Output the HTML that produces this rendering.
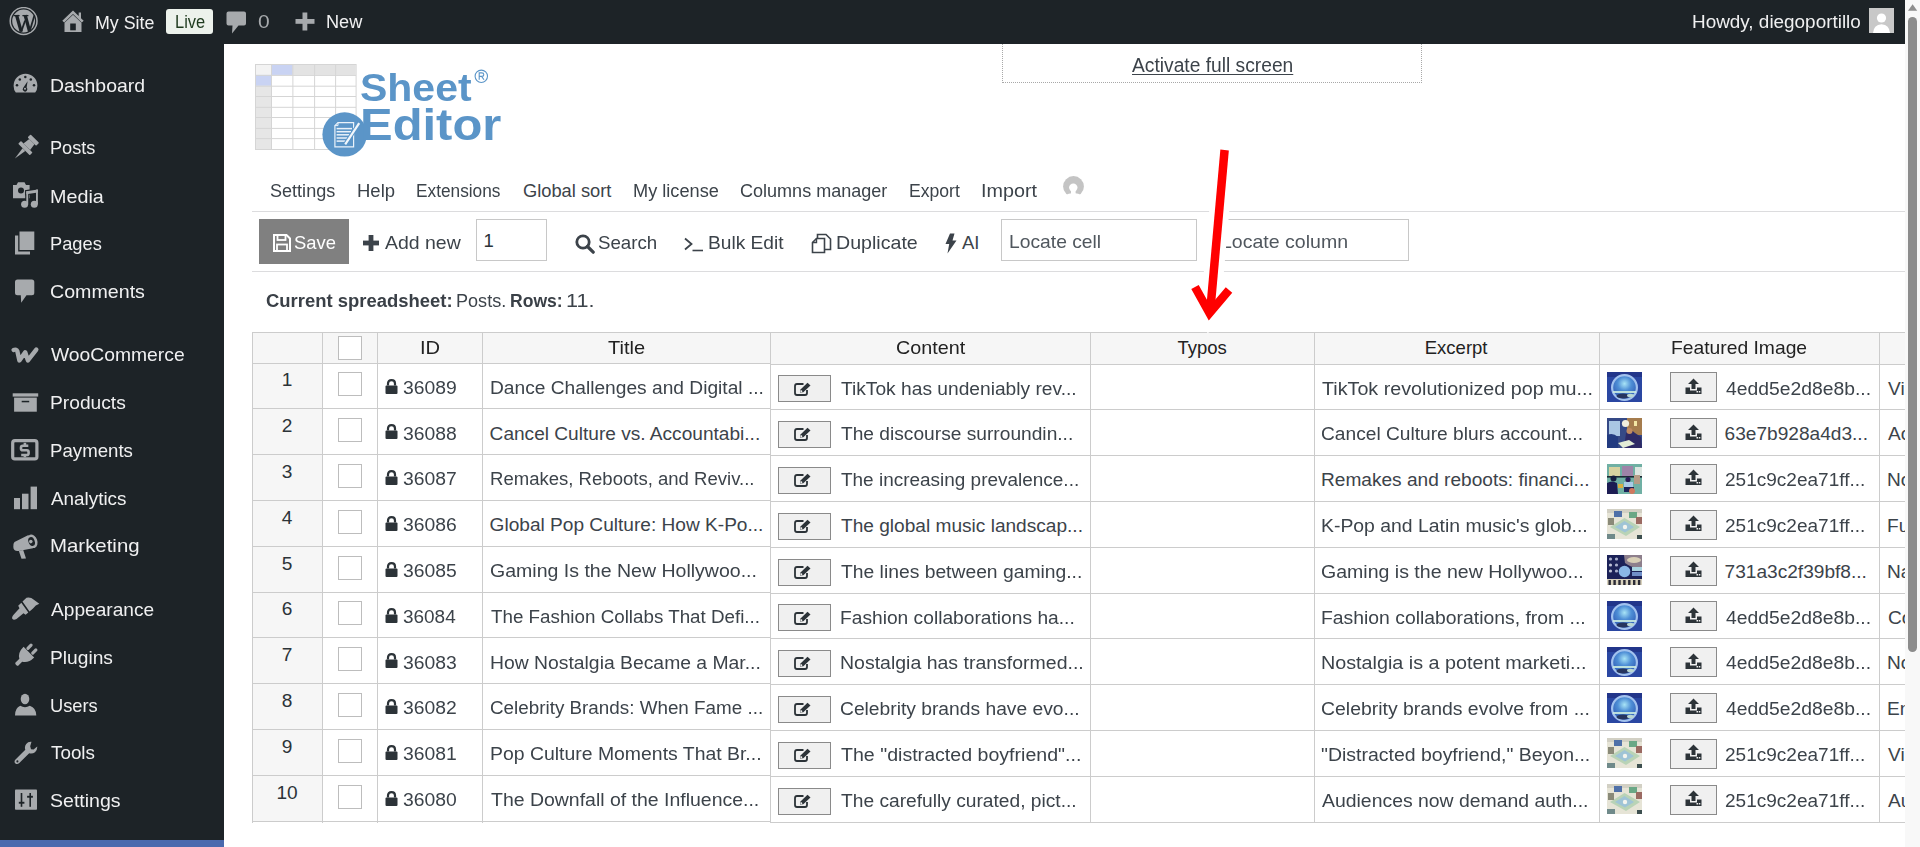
<!DOCTYPE html>
<html><head><meta charset="utf-8">
<style>
html,body{margin:0;padding:0}
body{width:1920px;height:847px;overflow:hidden;position:relative;background:#fff;font-family:"Liberation Sans",sans-serif}
.a{position:absolute}
.t{position:absolute;white-space:nowrap;line-height:1;transform-origin:0 0}
#ab{left:0;top:0;width:1905px;height:44px;background:#1d2327}
#sb{left:0;top:44px;width:224px;height:803px;background:#1d2327}
#sbact{left:0;top:840px;width:224px;height:7px;background:#4a6aae}
#track{left:1905px;top:0;width:15px;height:847px;background:#f8f8f8}
#thumb{left:1908px;top:17px;width:9px;height:635px;background:#8c8c8c;border-radius:5px}
.hl{position:absolute;height:1px;background:#ccc}
.vl{position:absolute;width:1px;background:#ccc}
.cb{position:absolute;width:22px;height:22px;border:1px solid #bdbdbd;background:#fff;box-sizing:content-box}
.eb{position:absolute;width:51px;height:25px;border:1px solid #8a8a8a;background:#f0f0f0}
.ub{position:absolute;width:45px;height:28px;border:1px solid #8a8a8a;background:#f0f0f0}
#clip{left:224px;top:44px;width:1681px;height:803px;overflow:hidden}
</style></head><body>
<div class="a" id="ab"></div>
<div class="a" id="sb"></div>
<div class="a" id="sbact"></div>

<!-- admin bar icons -->
<svg class="a" style="left:9px;top:7px" width="29" height="29" viewBox="0 0 29 29">
 <circle cx="14.6" cy="14" r="13.4" fill="none" stroke="#a7aaad" stroke-width="1.5"/>
 <circle cx="14.6" cy="14" r="11.4" fill="#a7aaad"/>
 <g stroke="#1d2327" fill="none" stroke-linecap="butt">
  <line x1="7.6" y1="8.2" x2="12.2" y2="24.6" stroke-width="3.3"/>
  <line x1="12.2" y1="24.6" x2="16.1" y2="13.6" stroke-width="1.7"/>
  <line x1="16.2" y1="8.2" x2="20.6" y2="24.6" stroke-width="3.3"/>
  <line x1="20.6" y1="24.6" x2="25.4" y2="8.6" stroke-width="1.8"/>
  <line x1="4.6" y1="8.6" x2="10.6" y2="8.6" stroke-width="1.3"/>
  <line x1="13.4" y1="8.6" x2="19.4" y2="8.6" stroke-width="1.3"/>
 </g>
</svg>
<svg class="a" style="left:62px;top:10px" width="22" height="23" viewBox="0 0 22 23">
 <path d="M11 0.5 L0.3 10.8 L2.2 12.4 L11 4 L19.8 12.4 L21.7 10.8 L19 8.2 L19 2.5 L16.7 2.5 L16.7 6 Z" fill="#a7aaad"/>
 <path d="M2.5 12.8 L11 4.8 L19.5 12.8 L19.5 22 L2.5 22 Z" fill="#a7aaad"/>
 <rect x="8.2" y="13.5" width="5.6" height="6.8" fill="#1d2327"/>
</svg>
<div class="a" style="left:166px;top:9px;width:47px;height:25px;background:#edf2ec;border-radius:3px"></div>
<svg class="a" style="left:226px;top:11px" width="21" height="23" viewBox="0 0 21 23">
 <path d="M2.5 0.5 H18 Q20 0.5 20 2.5 V12.5 Q20 14.5 18 14.5 H12.5 L6 22.5 L6.5 14.5 H2.5 Q0.5 14.5 0.5 12.5 V2.5 Q0.5 0.5 2.5 0.5 Z" fill="#a7aaad"/>
</svg>
<svg class="a" style="left:295px;top:12px" width="20" height="19" viewBox="0 0 20 19">
 <rect x="7.5" y="0.5" width="4.8" height="18" fill="#a7aaad"/><rect x="0.5" y="7" width="19" height="4.8" fill="#a7aaad"/>
</svg>
<svg class="a" style="left:1869px;top:8px" width="25" height="25" viewBox="0 0 25 25">
 <rect width="25" height="25" fill="#c8c8c8"/>
 <circle cx="12.5" cy="10" r="4.6" fill="#fff"/>
 <path d="M4 25 Q4.5 16.8 12.5 16.2 Q20.5 16.8 21 25 Z" fill="#fff"/>
</svg>

<!-- sidebar icons -->
<div id="sbicons"></div>
<svg class="a" style="left:0;top:44px" width="60" height="800" viewBox="0 44 60 800">
<path d="M25.5 73.8 A12 12 0 0 1 37.4 85.8 Q37.4 90 35.2 92.6 L15.8 92.6 Q13.6 90 13.6 85.8 A12 12 0 0 1 25.5 73.8 Z" fill="#a7aaad"/>
<circle cx="25.3" cy="77" r="1.25" fill="#1d2327"/>
<circle cx="19.8" cy="79.5" r="1.25" fill="#1d2327"/>
<circle cx="30.8" cy="79.5" r="1.25" fill="#1d2327"/>
<circle cx="17" cy="85.3" r="1.25" fill="#1d2327"/>
<circle cx="34" cy="85.3" r="1.25" fill="#1d2327"/>
<path d="M27.6 81.2 L26.6 87.6 A2.3 2.3 0 1 1 23.1 88 Z" fill="#1d2327"/><circle cx="25" cy="88.8" r="1.0" fill="#a7aaad"/>
<g transform="rotate(45 25.5 148)"><rect x="19.5" y="134.8" width="12" height="4.2" rx="0.8" fill="#a7aaad"/><path d="M21.8 139 H29.2 L30.2 146.2 H20.8 Z" fill="#a7aaad"/><rect x="17.3" y="146.2" width="16.4" height="4" rx="0.8" fill="#a7aaad"/><path d="M23.6 150.2 H27.4 L25.5 163 Z" fill="#a7aaad"/></g>
<path d="M13 185 H16.5 L18 182.2 H24.5 L26 185 H29.6 V198.2 H13 Z" fill="#a7aaad"/><circle cx="21" cy="190.6" r="3" fill="#1d2327"/>
<g fill="#1d2327" stroke="#1d2327" stroke-width="2.2"><circle cx="24.6" cy="204.2" r="3.5"/><circle cx="34.3" cy="204.2" r="3.5"/><rect x="26.3" y="191.2" width="1.9" height="13"/><rect x="36" y="189.6" width="1.9" height="14.6"/><path d="M26.3 191.2 L37.9 189.4 V192.4 L26.3 194.2 Z"/></g><g fill="#a7aaad"><circle cx="24.6" cy="204.2" r="3.5"/><circle cx="34.3" cy="204.2" r="3.5"/><rect x="26.3" y="191.2" width="1.9" height="13"/><rect x="36" y="189.6" width="1.9" height="14.6"/><path d="M26.3 191.2 L37.9 189.4 V192.4 L26.3 194.2 Z"/></g>
<path d="M15 235.5 H18.2 V251.4 H30 V254.6 H15 Z" fill="#a7aaad"/><rect x="19.5" y="231.5" width="14.8" height="18.5" fill="#a7aaad"/>
<path d="M17.5 279.6 H31.8 Q34.3 279.6 34.3 282.1 V292.7 Q34.3 295.2 31.8 295.2 H26.5 L21.2 302.7 L20.8 295.2 H17.5 Q15 295.2 15 292.7 V282.1 Q15 279.6 17.5 279.6 Z" fill="#a7aaad"/>
<path d="M13.6 350 Q16.4 348.8 17.4 351.4 L19.4 360.4 L25.2 352.2 L27.9 360.4 L36.3 349.6" fill="none" stroke="#a7aaad" stroke-width="4.4" stroke-linecap="round" stroke-linejoin="round"/>
<rect x="12.7" y="393.3" width="25.5" height="3.3" fill="#a7aaad"/><rect x="14.1" y="397.6" width="22.7" height="14.1" fill="#a7aaad"/><rect x="21.7" y="400.8" width="7.5" height="1.5" fill="#1d2327"/>
<rect x="12.7" y="440.7" width="24.2" height="18.2" rx="2.2" fill="none" stroke="#a7aaad" stroke-width="3.2"/>
<path d="M28.3 445.8 H22.8 Q21 445.8 21 447.6 V448.8 Q21 450.3 22.8 450.3 H26.8 Q28.6 450.3 28.6 452 V453.2 Q28.6 455 26.8 455 H21.2" fill="none" stroke="#a7aaad" stroke-width="2.6"/><rect x="23.6" y="442.8" width="2.6" height="3.2" fill="#a7aaad"/><rect x="23.6" y="454.5" width="2.6" height="2.8" fill="#a7aaad"/>
<rect x="14" y="498" width="6" height="11.2" fill="#a7aaad"/><rect x="22" y="493.7" width="6.5" height="15.5" fill="#a7aaad"/><rect x="30.6" y="486.6" width="6.4" height="22.6" fill="#a7aaad"/>
<path d="M14.5 542 L28.5 535 L33 548.2 L18.5 551 Q13.5 551.5 13.3 547 Q13.2 543.2 14.5 542 Z" fill="#a7aaad"/>
<ellipse cx="32.3" cy="541.3" rx="5" ry="7" transform="rotate(-20 32.3 541.3)" fill="#a7aaad"/><ellipse cx="31.6" cy="541.5" rx="3.1" ry="4.6" transform="rotate(-20 31.6 541.5)" fill="#1d2327"/><circle cx="30.8" cy="541.6" r="1.8" fill="#a7aaad"/>
<path d="M18.8 550.8 L23.2 550 L26 558.6 L21.5 558.8 Z" fill="#a7aaad"/>
<path d="M22.5 601.5 L26.5 597.8 Q31 597 33.5 599.5 L39.3 603.8 Q35.5 605 33 608.5 L29.5 611.5 Z" fill="#a7aaad"/>
<path d="M21.3 602.8 L28.3 612.5 L25.6 614.8 L23.5 613.2 L16.5 619 Q13.5 620.5 12.3 618.8 Q11.4 617.2 13.8 614.4 L19.5 608.2 L18.2 605.8 Z" fill="#a7aaad"/>
<g transform="rotate(45 25 656)"><rect x="20" y="642.5" width="3.2" height="7.5" rx="1.5" fill="#a7aaad"/><rect x="26.8" y="642.5" width="3.2" height="7.5" rx="1.5" fill="#a7aaad"/><path d="M17.5 650.5 H32.5 Q32.5 659 27 662 V668 Q25 669.5 23 668 V662 Q17.5 659 17.5 650.5 Z" fill="#a7aaad"/></g>
<ellipse cx="25" cy="699" rx="4.3" ry="5.2" fill="#a7aaad"/><path d="M15 715.6 Q15 708 20.2 705.8 Q25 708.5 29.8 705.8 Q36.3 708 36.3 715.6 Z" fill="#a7aaad"/>
<path d="M31.5 741.8 Q28 741.5 26.2 744 Q24.2 746.8 25.3 749.8 L15.5 759.6 Q13.6 761.8 15.4 763.4 Q17.2 765 19.3 763 L29.2 753.3 Q32.3 754.2 35 752.3 Q37.5 750.3 37.2 746.6 L33.6 749.6 L31 749.2 L30.2 746.2 Z" fill="#a7aaad"/><circle cx="17.4" cy="761.4" r="1.05" fill="#1d2327"/>
<rect x="15" y="789.6" width="22" height="20.1" rx="0.8" fill="#a7aaad"/><rect x="20.7" y="793" width="1.6" height="13.8" fill="#1d2327"/><rect x="29.4" y="793" width="1.6" height="13.8" fill="#1d2327"/><rect x="18.8" y="801.8" width="5.6" height="1.9" fill="#1d2327"/><rect x="27.1" y="795.8" width="5.8" height="1.9" fill="#1d2327"/>
</svg>

<!-- content -->
<svg class="a" style="left:255px;top:64px" width="102" height="86" viewBox="0 0 102 86"><rect x="0" y="0" width="100.6" height="85" fill="#fff"/><rect x="0" y="0" width="100.6" height="10.9" fill="#e3e3e3"/><rect x="0" y="0" width="16" height="85" fill="#e6e6e6"/><rect x="0" y="0" width="16" height="10.9" fill="#f3f3f3"/><rect x="16" y="0" width="21.4" height="10.9" fill="#c9d3f3"/><rect x="0" y="10.9" width="16" height="10.8" fill="#c9d3f3"/><line x1="0.5" y1="0" x2="0.5" y2="85" stroke="#d5d5d5" stroke-width="1"/><line x1="16.5" y1="0" x2="16.5" y2="85" stroke="#d5d5d5" stroke-width="1"/><line x1="37.9" y1="0" x2="37.9" y2="85" stroke="#d5d5d5" stroke-width="1"/><line x1="59.6" y1="0" x2="59.6" y2="85" stroke="#d5d5d5" stroke-width="1"/><line x1="80.6" y1="0" x2="80.6" y2="85" stroke="#d5d5d5" stroke-width="1"/><line x1="101.1" y1="0" x2="101.1" y2="85" stroke="#d5d5d5" stroke-width="1"/><line x1="0" y1="0.5" x2="101" y2="0.5" stroke="#d5d5d5" stroke-width="1"/><line x1="0" y1="11.4" x2="101" y2="11.4" stroke="#d5d5d5" stroke-width="1"/><line x1="0" y1="22.2" x2="101" y2="22.2" stroke="#d5d5d5" stroke-width="1"/><line x1="0" y1="32.5" x2="101" y2="32.5" stroke="#d5d5d5" stroke-width="1"/><line x1="0" y1="43.3" x2="101" y2="43.3" stroke="#d5d5d5" stroke-width="1"/><line x1="0" y1="53.5" x2="101" y2="53.5" stroke="#d5d5d5" stroke-width="1"/><line x1="0" y1="64.4" x2="101" y2="64.4" stroke="#d5d5d5" stroke-width="1"/><line x1="0" y1="74.6" x2="101" y2="74.6" stroke="#d5d5d5" stroke-width="1"/><line x1="0" y1="85.5" x2="101" y2="85.5" stroke="#d5d5d5" stroke-width="1"/></svg>
<svg class="a" style="left:320px;top:110px" width="50" height="50" viewBox="0 0 50 50">
<circle cx="24.6" cy="24.4" r="22.2" fill="#5b95c8"/>
<path d="M14.9 15.6 L18 12.6 L33.6 12.6 L33.6 36.8 L14.9 36.8 Z" fill="none" stroke="#eaf2fa" stroke-width="1.2"/>
<path d="M14.9 15.6 L18 15.6 L18 12.6" fill="none" stroke="#eaf2fa" stroke-width="1"/>
<g stroke="#eaf2fa" stroke-width="1.5"><line x1="16.6" y1="18.6" x2="32" y2="18.6"/><line x1="16.6" y1="21.7" x2="31" y2="21.7"/><line x1="16.6" y1="24.8" x2="29.5" y2="24.8"/><line x1="16.6" y1="28" x2="27.5" y2="28"/><line x1="16.6" y1="31.1" x2="25.5" y2="31.1"/></g>
<line x1="25" y1="34.6" x2="39.4" y2="12.8" stroke="#5b95c8" stroke-width="4.2"/>
<line x1="25.2" y1="34.3" x2="39.2" y2="13.1" stroke="#f2f7fc" stroke-width="2.2"/>
</svg>
<svg class="a" style="left:474px;top:69px" width="15" height="15" viewBox="0 0 15 15"><circle cx="7.3" cy="7.3" r="6.2" fill="none" stroke="#5b95c8" stroke-width="1.1"/><path d="M5.2 10.8 V3.9 H7.8 Q9.8 3.9 9.8 5.7 Q9.8 7.4 7.8 7.4 H5.2 M7.6 7.4 L10 10.8" fill="none" stroke="#5b95c8" stroke-width="1.1"/></svg>
<div class="a" style="left:1002px;top:44px;width:418px;height:38px;border:1px dotted #a8a8a8;border-top:none"></div>
<svg class="a" style="left:1062px;top:175px" width="24" height="22" viewBox="0 0 24 22"><circle cx="11.5" cy="11.5" r="10.4" fill="#c4c4c4"/><circle cx="11.3" cy="12.6" r="4.2" fill="#fff"/><rect x="9" y="12.6" width="4.6" height="8" fill="#fff"/><ellipse cx="11.5" cy="27.5" rx="12.5" ry="9.5" fill="#fff"/></svg>
<div class="a" style="left:252px;top:211px;width:1653px;height:1px;background:#dcdcde"></div>
<div class="a" style="left:252px;top:271px;width:1653px;height:1px;background:#dcdcde"></div>
<div class="a" style="left:259px;top:219px;width:90px;height:45px;background:#808080"></div>
<svg class="a" style="left:273px;top:234px" width="18" height="18" viewBox="0 0 18 18">
<path d="M1 1 H13.5 L17 4.5 V17 H1 Z" fill="none" stroke="#fff" stroke-width="2"/>
<rect x="4.5" y="1" width="8" height="5" fill="none" stroke="#fff" stroke-width="1.8"/>
<rect x="4" y="10.5" width="10" height="6.5" fill="none" stroke="#fff" stroke-width="1.8"/>
</svg>
<svg class="a" style="left:363px;top:235px" width="16" height="16" viewBox="0 0 16 16"><rect x="5.6" y="0" width="4.8" height="16" fill="#3c434a"/><rect x="0" y="5.6" width="16" height="4.8" fill="#3c434a"/></svg>
<div class="a" style="left:476px;top:219px;width:69px;height:40px;border:1px solid #c8c8c8;background:#fff"></div>
<svg class="a" style="left:575px;top:234px" width="20" height="20" viewBox="0 0 20 20"><circle cx="8" cy="8" r="6.2" fill="none" stroke="#3c434a" stroke-width="2.8"/><line x1="12.5" y1="12.5" x2="18.2" y2="18.2" stroke="#3c434a" stroke-width="3.2" stroke-linecap="round"/></svg>
<svg class="a" style="left:684px;top:236px" width="20" height="16" viewBox="0 0 20 16"><path d="M1 2.5 L7.5 8 L1 13.5" fill="none" stroke="#3c434a" stroke-width="1.8"/><line x1="8.5" y1="14.5" x2="19" y2="14.5" stroke="#3c434a" stroke-width="1.6"/></svg>
<svg class="a" style="left:811px;top:233px" width="21" height="21" viewBox="0 0 21 21"><path d="M6.5 5.5 L6.5 1.5 L15 1.5 L19.5 6 L19.5 16.5 L13.5 16.5" fill="none" stroke="#3c434a" stroke-width="1.6"/><path d="M1.5 9.5 L5.5 5.5 L13.5 5.5 L13.5 19.5 L1.5 19.5 Z" fill="none" stroke="#3c434a" stroke-width="1.6"/><path d="M1.5 9.5 L5.5 9.5 L5.5 5.5" fill="none" stroke="#3c434a" stroke-width="1.4"/></svg>
<svg class="a" style="left:945px;top:233px" width="12" height="21" viewBox="0 0 12 21"><path d="M5 0.5 L9.5 0.5 L7.5 7.5 L11.5 7.5 L2.5 20.5 L4.2 11 L0.5 11 Z" fill="#3c434a"/></svg>
<div class="a" style="left:1001px;top:219px;width:194px;height:40px;border:1px solid #c8c8c8;background:#fff"></div>
<div class="a" style="left:1213px;top:219px;width:194px;height:40px;border:1px solid #c8c8c8;background:#fff"></div>
<div class="a" style="left:253px;top:333px;width:517px;height:30px;background:#f6f6f6"></div>
<div class="a" style="left:771px;top:333px;width:1134px;height:31px;background:#f6f6f6"></div>
<div class="a" style="left:253px;top:363px;width:69px;height:458px;background:#f6f6f6"></div>
<div class="hl" style="left:252px;top:332px;width:1653px"></div>
<div class="hl" style="left:252px;top:363px;width:519px"></div>
<div class="hl" style="left:771px;top:364px;width:1134px"></div>
<div class="hl" style="left:252px;top:408px;width:519px"></div>
<div class="hl" style="left:771px;top:409px;width:1134px"></div>
<div class="hl" style="left:252px;top:454px;width:519px"></div>
<div class="hl" style="left:771px;top:455px;width:1134px"></div>
<div class="hl" style="left:252px;top:500px;width:519px"></div>
<div class="hl" style="left:771px;top:501px;width:1134px"></div>
<div class="hl" style="left:252px;top:546px;width:519px"></div>
<div class="hl" style="left:771px;top:547px;width:1134px"></div>
<div class="hl" style="left:252px;top:592px;width:519px"></div>
<div class="hl" style="left:771px;top:593px;width:1134px"></div>
<div class="hl" style="left:252px;top:637px;width:519px"></div>
<div class="hl" style="left:771px;top:638px;width:1134px"></div>
<div class="hl" style="left:252px;top:683px;width:519px"></div>
<div class="hl" style="left:771px;top:684px;width:1134px"></div>
<div class="hl" style="left:252px;top:729px;width:519px"></div>
<div class="hl" style="left:771px;top:730px;width:1134px"></div>
<div class="hl" style="left:252px;top:775px;width:519px"></div>
<div class="hl" style="left:771px;top:776px;width:1134px"></div>
<div class="hl" style="left:252px;top:821px;width:519px"></div>
<div class="hl" style="left:771px;top:822px;width:1134px"></div>
<div class="vl" style="left:252px;top:332px;height:491px"></div>
<div class="vl" style="left:322px;top:332px;height:491px"></div>
<div class="vl" style="left:377px;top:332px;height:491px"></div>
<div class="vl" style="left:482px;top:332px;height:491px"></div>
<div class="vl" style="left:770px;top:332px;height:491px"></div>
<div class="vl" style="left:1090px;top:332px;height:491px"></div>
<div class="vl" style="left:1314px;top:332px;height:491px"></div>
<div class="vl" style="left:1599px;top:332px;height:491px"></div>
<div class="vl" style="left:1879px;top:332px;height:491px"></div>
<div class="cb" style="left:338px;top:336px"></div>
<div class="cb" style="left:338px;top:372.3px"></div>
<svg class="a" style="left:385px;top:378.5px" width="13" height="15" viewBox="0 0 13 15"><path d="M3 6.5 V4.5 Q3 1.2 6.5 1.2 Q10 1.2 10 4.5 V6.5" fill="none" stroke="#2c3338" stroke-width="2.2"/><rect x="0.5" y="6.5" width="12" height="8.5" rx="1" fill="#2c3338"/></svg>
<div class="eb" style="left:778px;top:375.3px"></div>
<svg class="a" style="left:794px;top:381.5px" width="18" height="14" viewBox="0 0 18 14"><path d="M9.5 2 H3 Q1 2 1 4 V11 Q1 13 3 13 H11 Q13 13 13 11 V8" fill="none" stroke="#2c3338" stroke-width="1.8"/><path d="M6 10.5 L6.5 7.5 L13.5 0.8 L16.5 3.6 L9.3 10.3 Z" fill="#2c3338"/><circle cx="7.3" cy="9.2" r="1" fill="#f0f0f0"/></svg>
<svg class="a" style="left:1607px;top:372.0px" width="35" height="30" viewBox="0 0 35 30"><defs><filter id="tb1" x="0" y="0" width="35" height="30" filterUnits="userSpaceOnUse"><feGaussianBlur stdDeviation="0.7"/></filter><clipPath id="cp1"><rect width="35" height="30"/></clipPath></defs><g clip-path="url(#cp1)"><g filter="url(#tb1)"><defs><radialGradient id="gg1" cx="0.5" cy="0.35" r="0.6"><stop offset="0" stop-color="#a8e4f6"/><stop offset="0.45" stop-color="#4f8fd6"/><stop offset="1" stop-color="#2f5bb4"/></radialGradient></defs><rect width="35" height="30" fill="#2c46a2"/><rect width="35" height="5" fill="#23368a"/><circle cx="17.5" cy="15.5" r="12.6" fill="url(#gg1)"/><circle cx="17.5" cy="15.5" r="12.4" fill="none" stroke="#a2c2ee" stroke-width="2.2"/><rect x="6" y="19" width="23" height="2" fill="#c9eadf" opacity="0.9"/><ellipse cx="16" cy="24" rx="6.5" ry="2.6" fill="#27365e"/><ellipse cx="23.5" cy="23.5" rx="3.5" ry="1.8" fill="#b9d6d2"/></g></g></svg>
<div class="ub" style="left:1670px;top:372.3px"></div>
<svg class="a" style="left:1685px;top:377.8px" width="17" height="16" viewBox="0 0 17 16"><path d="M8.5 0.5 L14 6 L10.5 6 L10.5 11 L6.5 11 L6.5 6 L3 6 Z" fill="#2c3338"/><path d="M0.5 9.5 H5 V12.5 H12 V9.5 H16.5 V16 H0.5 Z" fill="#2c3338"/><rect x="11.5" y="13" width="1.5" height="1.5" fill="#f0f0f0"/><rect x="13.8" y="13" width="1.5" height="1.5" fill="#f0f0f0"/></svg>
<div class="cb" style="left:338px;top:418.1px"></div>
<svg class="a" style="left:385px;top:424.3px" width="13" height="15" viewBox="0 0 13 15"><path d="M3 6.5 V4.5 Q3 1.2 6.5 1.2 Q10 1.2 10 4.5 V6.5" fill="none" stroke="#2c3338" stroke-width="2.2"/><rect x="0.5" y="6.5" width="12" height="8.5" rx="1" fill="#2c3338"/></svg>
<div class="eb" style="left:778px;top:421.1px"></div>
<svg class="a" style="left:794px;top:427.3px" width="18" height="14" viewBox="0 0 18 14"><path d="M9.5 2 H3 Q1 2 1 4 V11 Q1 13 3 13 H11 Q13 13 13 11 V8" fill="none" stroke="#2c3338" stroke-width="1.8"/><path d="M6 10.5 L6.5 7.5 L13.5 0.8 L16.5 3.6 L9.3 10.3 Z" fill="#2c3338"/><circle cx="7.3" cy="9.2" r="1" fill="#f0f0f0"/></svg>
<svg class="a" style="left:1607px;top:417.8px" width="35" height="30" viewBox="0 0 35 30"><defs><filter id="tb2" x="0" y="0" width="35" height="30" filterUnits="userSpaceOnUse"><feGaussianBlur stdDeviation="0.7"/></filter><clipPath id="cp2"><rect width="35" height="30"/></clipPath></defs><g clip-path="url(#cp2)"><g filter="url(#tb2)"><rect width="35" height="30" fill="#354a86"/><rect x="20" y="0" width="15" height="17" fill="#a57c4e"/><rect x="27" y="3" width="3" height="5" fill="#f2e6a4"/><rect x="2" y="3" width="11" height="15" fill="#a9c6e3"/><circle cx="18.5" cy="5.5" r="3.6" fill="#f1eedd"/><path d="M17 30 L19 15 Q24 10 28 15 L34 19 L35 30 Z" fill="#2d2a66"/><circle cx="22.5" cy="13" r="3" fill="#c08a62"/><path d="M11 25 L22 22 L28 26 L16 30 Z" fill="#e2ecd6"/><path d="M0 17 Q6 14 11 19 L11 30 L0 30 Z" fill="#243a80"/></g></g></svg>
<div class="ub" style="left:1670px;top:418.1px"></div>
<svg class="a" style="left:1685px;top:423.6px" width="17" height="16" viewBox="0 0 17 16"><path d="M8.5 0.5 L14 6 L10.5 6 L10.5 11 L6.5 11 L6.5 6 L3 6 Z" fill="#2c3338"/><path d="M0.5 9.5 H5 V12.5 H12 V9.5 H16.5 V16 H0.5 Z" fill="#2c3338"/><rect x="11.5" y="13" width="1.5" height="1.5" fill="#f0f0f0"/><rect x="13.8" y="13" width="1.5" height="1.5" fill="#f0f0f0"/></svg>
<div class="cb" style="left:338px;top:463.9px"></div>
<svg class="a" style="left:385px;top:470.1px" width="13" height="15" viewBox="0 0 13 15"><path d="M3 6.5 V4.5 Q3 1.2 6.5 1.2 Q10 1.2 10 4.5 V6.5" fill="none" stroke="#2c3338" stroke-width="2.2"/><rect x="0.5" y="6.5" width="12" height="8.5" rx="1" fill="#2c3338"/></svg>
<div class="eb" style="left:778px;top:466.9px"></div>
<svg class="a" style="left:794px;top:473.1px" width="18" height="14" viewBox="0 0 18 14"><path d="M9.5 2 H3 Q1 2 1 4 V11 Q1 13 3 13 H11 Q13 13 13 11 V8" fill="none" stroke="#2c3338" stroke-width="1.8"/><path d="M6 10.5 L6.5 7.5 L13.5 0.8 L16.5 3.6 L9.3 10.3 Z" fill="#2c3338"/><circle cx="7.3" cy="9.2" r="1" fill="#f0f0f0"/></svg>
<svg class="a" style="left:1607px;top:463.6px" width="35" height="30" viewBox="0 0 35 30"><defs><filter id="tb3" x="0" y="0" width="35" height="30" filterUnits="userSpaceOnUse"><feGaussianBlur stdDeviation="0.7"/></filter><clipPath id="cp3"><rect width="35" height="30"/></clipPath></defs><g clip-path="url(#cp3)"><g filter="url(#tb3)"><rect width="35" height="30" fill="#6fb0a4"/><rect x="2" y="3" width="11" height="10" fill="#d8d2a0"/><rect x="15" y="2" width="11" height="11" fill="#9e83a8"/><rect x="28" y="3" width="7" height="9" fill="#dde6e0"/><rect x="0" y="12" width="35" height="1.6" fill="#1a2a36"/><circle cx="6.5" cy="14.5" r="3" fill="#161b3e"/><path d="M0 30 L0 19 Q5 16 10 19 L11 30 Z" fill="#1c1f52"/><circle cx="21" cy="15.5" r="2.6" fill="#2a1d5a"/><rect x="17" y="18" width="9" height="5" fill="#a9cbe6"/><rect x="17" y="23" width="10" height="5" fill="#1f2258"/><rect x="27" y="11" width="6" height="9" fill="#b59c86"/><circle cx="25" cy="27" r="3" fill="#d0785e"/><rect x="11" y="20" width="5" height="4" fill="#d9b043"/></g></g></svg>
<div class="ub" style="left:1670px;top:463.9px"></div>
<svg class="a" style="left:1685px;top:469.4px" width="17" height="16" viewBox="0 0 17 16"><path d="M8.5 0.5 L14 6 L10.5 6 L10.5 11 L6.5 11 L6.5 6 L3 6 Z" fill="#2c3338"/><path d="M0.5 9.5 H5 V12.5 H12 V9.5 H16.5 V16 H0.5 Z" fill="#2c3338"/><rect x="11.5" y="13" width="1.5" height="1.5" fill="#f0f0f0"/><rect x="13.8" y="13" width="1.5" height="1.5" fill="#f0f0f0"/></svg>
<div class="cb" style="left:338px;top:509.7px"></div>
<svg class="a" style="left:385px;top:515.9px" width="13" height="15" viewBox="0 0 13 15"><path d="M3 6.5 V4.5 Q3 1.2 6.5 1.2 Q10 1.2 10 4.5 V6.5" fill="none" stroke="#2c3338" stroke-width="2.2"/><rect x="0.5" y="6.5" width="12" height="8.5" rx="1" fill="#2c3338"/></svg>
<div class="eb" style="left:778px;top:512.7px"></div>
<svg class="a" style="left:794px;top:518.9px" width="18" height="14" viewBox="0 0 18 14"><path d="M9.5 2 H3 Q1 2 1 4 V11 Q1 13 3 13 H11 Q13 13 13 11 V8" fill="none" stroke="#2c3338" stroke-width="1.8"/><path d="M6 10.5 L6.5 7.5 L13.5 0.8 L16.5 3.6 L9.3 10.3 Z" fill="#2c3338"/><circle cx="7.3" cy="9.2" r="1" fill="#f0f0f0"/></svg>
<svg class="a" style="left:1607px;top:509.4px" width="35" height="30" viewBox="0 0 35 30"><defs><filter id="tb4" x="0" y="0" width="35" height="30" filterUnits="userSpaceOnUse"><feGaussianBlur stdDeviation="0.7"/></filter><clipPath id="cp4"><rect width="35" height="30"/></clipPath></defs><g clip-path="url(#cp4)"><g filter="url(#tb4)"><rect width="35" height="30" fill="#e6e4d6"/><rect x="0" y="0" width="35" height="4" fill="#d2d0c4"/><path d="M17.5 9 L33 18 L19 27 L3 18 Z" fill="#b9d3b6"/><path d="M17.5 12 L27 18 L18 23.5 L8 18 Z" fill="#9fc4d6"/><circle cx="18" cy="18" r="2.2" fill="#f4f4ee"/><rect x="7" y="2" width="8" height="6" fill="#4f6fa8"/><rect x="22" y="3" width="8" height="6" fill="#6aa886"/><rect x="29" y="8" width="6" height="7" fill="#9b6a62"/><rect x="1" y="9" width="6" height="7" fill="#8a8a78"/><rect x="0" y="25" width="8" height="5" fill="#6f8a8a"/><rect x="30" y="26" width="5" height="4" fill="#3e5050"/></g></g></svg>
<div class="ub" style="left:1670px;top:509.7px"></div>
<svg class="a" style="left:1685px;top:515.2px" width="17" height="16" viewBox="0 0 17 16"><path d="M8.5 0.5 L14 6 L10.5 6 L10.5 11 L6.5 11 L6.5 6 L3 6 Z" fill="#2c3338"/><path d="M0.5 9.5 H5 V12.5 H12 V9.5 H16.5 V16 H0.5 Z" fill="#2c3338"/><rect x="11.5" y="13" width="1.5" height="1.5" fill="#f0f0f0"/><rect x="13.8" y="13" width="1.5" height="1.5" fill="#f0f0f0"/></svg>
<div class="cb" style="left:338px;top:555.5px"></div>
<svg class="a" style="left:385px;top:561.7px" width="13" height="15" viewBox="0 0 13 15"><path d="M3 6.5 V4.5 Q3 1.2 6.5 1.2 Q10 1.2 10 4.5 V6.5" fill="none" stroke="#2c3338" stroke-width="2.2"/><rect x="0.5" y="6.5" width="12" height="8.5" rx="1" fill="#2c3338"/></svg>
<div class="eb" style="left:778px;top:558.5px"></div>
<svg class="a" style="left:794px;top:564.7px" width="18" height="14" viewBox="0 0 18 14"><path d="M9.5 2 H3 Q1 2 1 4 V11 Q1 13 3 13 H11 Q13 13 13 11 V8" fill="none" stroke="#2c3338" stroke-width="1.8"/><path d="M6 10.5 L6.5 7.5 L13.5 0.8 L16.5 3.6 L9.3 10.3 Z" fill="#2c3338"/><circle cx="7.3" cy="9.2" r="1" fill="#f0f0f0"/></svg>
<svg class="a" style="left:1607px;top:555.2px" width="35" height="30" viewBox="0 0 35 30"><defs><filter id="tb5" x="0" y="0" width="35" height="30" filterUnits="userSpaceOnUse"><feGaussianBlur stdDeviation="0.7"/></filter><clipPath id="cp5"><rect width="35" height="30"/></clipPath></defs><g clip-path="url(#cp5)"><g filter="url(#tb5)"><rect width="35" height="30" fill="#1c2458"/><path d="M17 0 L35 0 L35 12 Q26 14 18 8 Z" fill="#8d7f8c"/><ellipse cx="27" cy="5" rx="7" ry="3" fill="#d8cfb6"/><rect x="25" y="12" width="10" height="4" fill="#a9d4e0"/><rect x="25" y="17" width="10" height="4" fill="#6f8fc8"/><circle cx="3.5" cy="4" r="1.6" fill="#aab0cc"/><circle cx="9.5" cy="4" r="1.6" fill="#aab0cc"/><circle cx="3.5" cy="10" r="1.6" fill="#c0c4d8"/><circle cx="9.5" cy="10" r="1.6" fill="#aab0cc"/><circle cx="3.5" cy="16" r="1.6" fill="#c0c4d8"/><circle cx="9.5" cy="16" r="1.6" fill="#aab0cc"/><circle cx="17.5" cy="16.5" r="5.8" fill="#8ab8e6"/><rect x="0" y="24" width="35" height="6" fill="#d9d2bd"/><rect x="1.5" y="25" width="2.4" height="5" fill="#2a2a36"/><rect x="6.4" y="25" width="2.4" height="5" fill="#2a2a36"/><rect x="11.3" y="25" width="2.4" height="5" fill="#2a2a36"/><rect x="16.2" y="25" width="2.4" height="5" fill="#2a2a36"/><rect x="21.1" y="25" width="2.4" height="5" fill="#2a2a36"/><rect x="26.0" y="25" width="2.4" height="5" fill="#2a2a36"/><rect x="30.9" y="25" width="2.4" height="5" fill="#2a2a36"/></g></g></svg>
<div class="ub" style="left:1670px;top:555.5px"></div>
<svg class="a" style="left:1685px;top:561.0px" width="17" height="16" viewBox="0 0 17 16"><path d="M8.5 0.5 L14 6 L10.5 6 L10.5 11 L6.5 11 L6.5 6 L3 6 Z" fill="#2c3338"/><path d="M0.5 9.5 H5 V12.5 H12 V9.5 H16.5 V16 H0.5 Z" fill="#2c3338"/><rect x="11.5" y="13" width="1.5" height="1.5" fill="#f0f0f0"/><rect x="13.8" y="13" width="1.5" height="1.5" fill="#f0f0f0"/></svg>
<div class="cb" style="left:338px;top:601.3px"></div>
<svg class="a" style="left:385px;top:607.5px" width="13" height="15" viewBox="0 0 13 15"><path d="M3 6.5 V4.5 Q3 1.2 6.5 1.2 Q10 1.2 10 4.5 V6.5" fill="none" stroke="#2c3338" stroke-width="2.2"/><rect x="0.5" y="6.5" width="12" height="8.5" rx="1" fill="#2c3338"/></svg>
<div class="eb" style="left:778px;top:604.3px"></div>
<svg class="a" style="left:794px;top:610.5px" width="18" height="14" viewBox="0 0 18 14"><path d="M9.5 2 H3 Q1 2 1 4 V11 Q1 13 3 13 H11 Q13 13 13 11 V8" fill="none" stroke="#2c3338" stroke-width="1.8"/><path d="M6 10.5 L6.5 7.5 L13.5 0.8 L16.5 3.6 L9.3 10.3 Z" fill="#2c3338"/><circle cx="7.3" cy="9.2" r="1" fill="#f0f0f0"/></svg>
<svg class="a" style="left:1607px;top:601.0px" width="35" height="30" viewBox="0 0 35 30"><defs><filter id="tb6" x="0" y="0" width="35" height="30" filterUnits="userSpaceOnUse"><feGaussianBlur stdDeviation="0.7"/></filter><clipPath id="cp6"><rect width="35" height="30"/></clipPath></defs><g clip-path="url(#cp6)"><g filter="url(#tb6)"><defs><radialGradient id="gg6" cx="0.5" cy="0.35" r="0.6"><stop offset="0" stop-color="#a8e4f6"/><stop offset="0.45" stop-color="#4f8fd6"/><stop offset="1" stop-color="#2f5bb4"/></radialGradient></defs><rect width="35" height="30" fill="#2c46a2"/><rect width="35" height="5" fill="#23368a"/><circle cx="17.5" cy="15.5" r="12.6" fill="url(#gg6)"/><circle cx="17.5" cy="15.5" r="12.4" fill="none" stroke="#a2c2ee" stroke-width="2.2"/><rect x="6" y="19" width="23" height="2" fill="#c9eadf" opacity="0.9"/><ellipse cx="16" cy="24" rx="6.5" ry="2.6" fill="#27365e"/><ellipse cx="23.5" cy="23.5" rx="3.5" ry="1.8" fill="#b9d6d2"/></g></g></svg>
<div class="ub" style="left:1670px;top:601.3px"></div>
<svg class="a" style="left:1685px;top:606.8px" width="17" height="16" viewBox="0 0 17 16"><path d="M8.5 0.5 L14 6 L10.5 6 L10.5 11 L6.5 11 L6.5 6 L3 6 Z" fill="#2c3338"/><path d="M0.5 9.5 H5 V12.5 H12 V9.5 H16.5 V16 H0.5 Z" fill="#2c3338"/><rect x="11.5" y="13" width="1.5" height="1.5" fill="#f0f0f0"/><rect x="13.8" y="13" width="1.5" height="1.5" fill="#f0f0f0"/></svg>
<div class="cb" style="left:338px;top:647.1px"></div>
<svg class="a" style="left:385px;top:653.3px" width="13" height="15" viewBox="0 0 13 15"><path d="M3 6.5 V4.5 Q3 1.2 6.5 1.2 Q10 1.2 10 4.5 V6.5" fill="none" stroke="#2c3338" stroke-width="2.2"/><rect x="0.5" y="6.5" width="12" height="8.5" rx="1" fill="#2c3338"/></svg>
<div class="eb" style="left:778px;top:650.1px"></div>
<svg class="a" style="left:794px;top:656.3px" width="18" height="14" viewBox="0 0 18 14"><path d="M9.5 2 H3 Q1 2 1 4 V11 Q1 13 3 13 H11 Q13 13 13 11 V8" fill="none" stroke="#2c3338" stroke-width="1.8"/><path d="M6 10.5 L6.5 7.5 L13.5 0.8 L16.5 3.6 L9.3 10.3 Z" fill="#2c3338"/><circle cx="7.3" cy="9.2" r="1" fill="#f0f0f0"/></svg>
<svg class="a" style="left:1607px;top:646.8px" width="35" height="30" viewBox="0 0 35 30"><defs><filter id="tb7" x="0" y="0" width="35" height="30" filterUnits="userSpaceOnUse"><feGaussianBlur stdDeviation="0.7"/></filter><clipPath id="cp7"><rect width="35" height="30"/></clipPath></defs><g clip-path="url(#cp7)"><g filter="url(#tb7)"><defs><radialGradient id="gg7" cx="0.5" cy="0.35" r="0.6"><stop offset="0" stop-color="#a8e4f6"/><stop offset="0.45" stop-color="#4f8fd6"/><stop offset="1" stop-color="#2f5bb4"/></radialGradient></defs><rect width="35" height="30" fill="#2c46a2"/><rect width="35" height="5" fill="#23368a"/><circle cx="17.5" cy="15.5" r="12.6" fill="url(#gg7)"/><circle cx="17.5" cy="15.5" r="12.4" fill="none" stroke="#a2c2ee" stroke-width="2.2"/><rect x="6" y="19" width="23" height="2" fill="#c9eadf" opacity="0.9"/><ellipse cx="16" cy="24" rx="6.5" ry="2.6" fill="#27365e"/><ellipse cx="23.5" cy="23.5" rx="3.5" ry="1.8" fill="#b9d6d2"/></g></g></svg>
<div class="ub" style="left:1670px;top:647.1px"></div>
<svg class="a" style="left:1685px;top:652.6px" width="17" height="16" viewBox="0 0 17 16"><path d="M8.5 0.5 L14 6 L10.5 6 L10.5 11 L6.5 11 L6.5 6 L3 6 Z" fill="#2c3338"/><path d="M0.5 9.5 H5 V12.5 H12 V9.5 H16.5 V16 H0.5 Z" fill="#2c3338"/><rect x="11.5" y="13" width="1.5" height="1.5" fill="#f0f0f0"/><rect x="13.8" y="13" width="1.5" height="1.5" fill="#f0f0f0"/></svg>
<div class="cb" style="left:338px;top:692.9px"></div>
<svg class="a" style="left:385px;top:699.1px" width="13" height="15" viewBox="0 0 13 15"><path d="M3 6.5 V4.5 Q3 1.2 6.5 1.2 Q10 1.2 10 4.5 V6.5" fill="none" stroke="#2c3338" stroke-width="2.2"/><rect x="0.5" y="6.5" width="12" height="8.5" rx="1" fill="#2c3338"/></svg>
<div class="eb" style="left:778px;top:695.9px"></div>
<svg class="a" style="left:794px;top:702.1px" width="18" height="14" viewBox="0 0 18 14"><path d="M9.5 2 H3 Q1 2 1 4 V11 Q1 13 3 13 H11 Q13 13 13 11 V8" fill="none" stroke="#2c3338" stroke-width="1.8"/><path d="M6 10.5 L6.5 7.5 L13.5 0.8 L16.5 3.6 L9.3 10.3 Z" fill="#2c3338"/><circle cx="7.3" cy="9.2" r="1" fill="#f0f0f0"/></svg>
<svg class="a" style="left:1607px;top:692.6px" width="35" height="30" viewBox="0 0 35 30"><defs><filter id="tb8" x="0" y="0" width="35" height="30" filterUnits="userSpaceOnUse"><feGaussianBlur stdDeviation="0.7"/></filter><clipPath id="cp8"><rect width="35" height="30"/></clipPath></defs><g clip-path="url(#cp8)"><g filter="url(#tb8)"><defs><radialGradient id="gg8" cx="0.5" cy="0.35" r="0.6"><stop offset="0" stop-color="#a8e4f6"/><stop offset="0.45" stop-color="#4f8fd6"/><stop offset="1" stop-color="#2f5bb4"/></radialGradient></defs><rect width="35" height="30" fill="#2c46a2"/><rect width="35" height="5" fill="#23368a"/><circle cx="17.5" cy="15.5" r="12.6" fill="url(#gg8)"/><circle cx="17.5" cy="15.5" r="12.4" fill="none" stroke="#a2c2ee" stroke-width="2.2"/><rect x="6" y="19" width="23" height="2" fill="#c9eadf" opacity="0.9"/><ellipse cx="16" cy="24" rx="6.5" ry="2.6" fill="#27365e"/><ellipse cx="23.5" cy="23.5" rx="3.5" ry="1.8" fill="#b9d6d2"/></g></g></svg>
<div class="ub" style="left:1670px;top:692.9px"></div>
<svg class="a" style="left:1685px;top:698.4px" width="17" height="16" viewBox="0 0 17 16"><path d="M8.5 0.5 L14 6 L10.5 6 L10.5 11 L6.5 11 L6.5 6 L3 6 Z" fill="#2c3338"/><path d="M0.5 9.5 H5 V12.5 H12 V9.5 H16.5 V16 H0.5 Z" fill="#2c3338"/><rect x="11.5" y="13" width="1.5" height="1.5" fill="#f0f0f0"/><rect x="13.8" y="13" width="1.5" height="1.5" fill="#f0f0f0"/></svg>
<div class="cb" style="left:338px;top:738.7px"></div>
<svg class="a" style="left:385px;top:744.9px" width="13" height="15" viewBox="0 0 13 15"><path d="M3 6.5 V4.5 Q3 1.2 6.5 1.2 Q10 1.2 10 4.5 V6.5" fill="none" stroke="#2c3338" stroke-width="2.2"/><rect x="0.5" y="6.5" width="12" height="8.5" rx="1" fill="#2c3338"/></svg>
<div class="eb" style="left:778px;top:741.7px"></div>
<svg class="a" style="left:794px;top:747.9px" width="18" height="14" viewBox="0 0 18 14"><path d="M9.5 2 H3 Q1 2 1 4 V11 Q1 13 3 13 H11 Q13 13 13 11 V8" fill="none" stroke="#2c3338" stroke-width="1.8"/><path d="M6 10.5 L6.5 7.5 L13.5 0.8 L16.5 3.6 L9.3 10.3 Z" fill="#2c3338"/><circle cx="7.3" cy="9.2" r="1" fill="#f0f0f0"/></svg>
<svg class="a" style="left:1607px;top:738.4px" width="35" height="30" viewBox="0 0 35 30"><defs><filter id="tb9" x="0" y="0" width="35" height="30" filterUnits="userSpaceOnUse"><feGaussianBlur stdDeviation="0.7"/></filter><clipPath id="cp9"><rect width="35" height="30"/></clipPath></defs><g clip-path="url(#cp9)"><g filter="url(#tb9)"><rect width="35" height="30" fill="#e6e4d6"/><rect x="0" y="0" width="35" height="4" fill="#d2d0c4"/><path d="M17.5 9 L33 18 L19 27 L3 18 Z" fill="#b9d3b6"/><path d="M17.5 12 L27 18 L18 23.5 L8 18 Z" fill="#9fc4d6"/><circle cx="18" cy="18" r="2.2" fill="#f4f4ee"/><rect x="7" y="2" width="8" height="6" fill="#4f6fa8"/><rect x="22" y="3" width="8" height="6" fill="#6aa886"/><rect x="29" y="8" width="6" height="7" fill="#9b6a62"/><rect x="1" y="9" width="6" height="7" fill="#8a8a78"/><rect x="0" y="25" width="8" height="5" fill="#6f8a8a"/><rect x="30" y="26" width="5" height="4" fill="#3e5050"/></g></g></svg>
<div class="ub" style="left:1670px;top:738.7px"></div>
<svg class="a" style="left:1685px;top:744.2px" width="17" height="16" viewBox="0 0 17 16"><path d="M8.5 0.5 L14 6 L10.5 6 L10.5 11 L6.5 11 L6.5 6 L3 6 Z" fill="#2c3338"/><path d="M0.5 9.5 H5 V12.5 H12 V9.5 H16.5 V16 H0.5 Z" fill="#2c3338"/><rect x="11.5" y="13" width="1.5" height="1.5" fill="#f0f0f0"/><rect x="13.8" y="13" width="1.5" height="1.5" fill="#f0f0f0"/></svg>
<div class="cb" style="left:338px;top:784.5px"></div>
<svg class="a" style="left:385px;top:790.7px" width="13" height="15" viewBox="0 0 13 15"><path d="M3 6.5 V4.5 Q3 1.2 6.5 1.2 Q10 1.2 10 4.5 V6.5" fill="none" stroke="#2c3338" stroke-width="2.2"/><rect x="0.5" y="6.5" width="12" height="8.5" rx="1" fill="#2c3338"/></svg>
<div class="eb" style="left:778px;top:787.5px"></div>
<svg class="a" style="left:794px;top:793.7px" width="18" height="14" viewBox="0 0 18 14"><path d="M9.5 2 H3 Q1 2 1 4 V11 Q1 13 3 13 H11 Q13 13 13 11 V8" fill="none" stroke="#2c3338" stroke-width="1.8"/><path d="M6 10.5 L6.5 7.5 L13.5 0.8 L16.5 3.6 L9.3 10.3 Z" fill="#2c3338"/><circle cx="7.3" cy="9.2" r="1" fill="#f0f0f0"/></svg>
<svg class="a" style="left:1607px;top:784.2px" width="35" height="30" viewBox="0 0 35 30"><defs><filter id="tb10" x="0" y="0" width="35" height="30" filterUnits="userSpaceOnUse"><feGaussianBlur stdDeviation="0.7"/></filter><clipPath id="cp10"><rect width="35" height="30"/></clipPath></defs><g clip-path="url(#cp10)"><g filter="url(#tb10)"><rect width="35" height="30" fill="#e6e4d6"/><rect x="0" y="0" width="35" height="4" fill="#d2d0c4"/><path d="M17.5 9 L33 18 L19 27 L3 18 Z" fill="#b9d3b6"/><path d="M17.5 12 L27 18 L18 23.5 L8 18 Z" fill="#9fc4d6"/><circle cx="18" cy="18" r="2.2" fill="#f4f4ee"/><rect x="7" y="2" width="8" height="6" fill="#4f6fa8"/><rect x="22" y="3" width="8" height="6" fill="#6aa886"/><rect x="29" y="8" width="6" height="7" fill="#9b6a62"/><rect x="1" y="9" width="6" height="7" fill="#8a8a78"/><rect x="0" y="25" width="8" height="5" fill="#6f8a8a"/><rect x="30" y="26" width="5" height="4" fill="#3e5050"/></g></g></svg>
<div class="ub" style="left:1670px;top:784.5px"></div>
<svg class="a" style="left:1685px;top:790.0px" width="17" height="16" viewBox="0 0 17 16"><path d="M8.5 0.5 L14 6 L10.5 6 L10.5 11 L6.5 11 L6.5 6 L3 6 Z" fill="#2c3338"/><path d="M0.5 9.5 H5 V12.5 H12 V9.5 H16.5 V16 H0.5 Z" fill="#2c3338"/><rect x="11.5" y="13" width="1.5" height="1.5" fill="#f0f0f0"/><rect x="13.8" y="13" width="1.5" height="1.5" fill="#f0f0f0"/></svg>
<div class="t " id="t0" style="left:94.98px;top:14.69px;font-size:17.50px;color:#f0f0f1;transform:scaleX(1.0175);">My Site</div>
<div class="t " id="t1" style="left:174.67px;top:14.49px;font-size:17.50px;color:#1e3a1e;transform:scaleX(0.9400);">Live</div>
<div class="t " id="t2" style="left:257.80px;top:14.49px;font-size:17.50px;color:#a7aaad;transform:scaleX(1.2000);font-family:"Liberation Serif",serif;">0</div>
<div class="t " id="t3" style="left:325.53px;top:14.49px;font-size:17.50px;color:#f0f0f1;transform:scaleX(1.0382);">New</div>
<div class="t " id="t4" style="left:1691.92px;top:14.39px;font-size:17.50px;color:#f0f0f1;transform:scaleX(1.0800);">Howdy, diegoportillo</div>
<div class="t " id="t5" style="left:49.98px;top:75.92px;font-size:19.00px;color:#f0f0f1;transform:scaleX(1.0220);">Dashboard</div>
<div class="t " id="t6" style="left:50.04px;top:138.42px;font-size:19.00px;color:#f0f0f1;transform:scaleX(0.9565);">Posts</div>
<div class="t " id="t7" style="left:49.96px;top:186.62px;font-size:19.00px;color:#f0f0f1;transform:scaleX(1.0392);">Media</div>
<div class="t " id="t8" style="left:50.04px;top:234.42px;font-size:19.00px;color:#f0f0f1;transform:scaleX(0.9615);">Pages</div>
<div class="t " id="t9" style="left:49.97px;top:282.22px;font-size:19.00px;color:#f0f0f1;transform:scaleX(1.0333);">Comments</div>
<div class="t " id="t10" style="left:51.00px;top:345.42px;font-size:19.00px;color:#f0f0f1;transform:scaleX(1.0153);">WooCommerce</div>
<div class="t " id="t11" style="left:49.99px;top:393.42px;font-size:19.00px;color:#f0f0f1;transform:scaleX(1.0108);">Products</div>
<div class="t " id="t12" style="left:50.02px;top:440.92px;font-size:19.00px;color:#f0f0f1;transform:scaleX(0.9819);">Payments</div>
<div class="t " id="t13" style="left:51.00px;top:488.72px;font-size:19.00px;color:#f0f0f1;transform:scaleX(0.9921);">Analytics</div>
<div class="t " id="t14" style="left:49.93px;top:536.42px;font-size:19.00px;color:#f0f0f1;transform:scaleX(1.0741);">Marketing</div>
<div class="t " id="t15" style="left:51.00px;top:600.12px;font-size:19.00px;color:#f0f0f1;transform:scaleX(1.0059);">Appearance</div>
<div class="t " id="t16" style="left:49.99px;top:647.72px;font-size:19.00px;color:#f0f0f1;transform:scaleX(1.0098);">Plugins</div>
<div class="t " id="t17" style="left:50.04px;top:695.52px;font-size:19.00px;color:#f0f0f1;transform:scaleX(0.9625);">Users</div>
<div class="t " id="t18" style="left:51.00px;top:743.42px;font-size:19.00px;color:#f0f0f1;transform:scaleX(0.9909);">Tools</div>
<div class="t " id="t19" style="left:49.97px;top:791.42px;font-size:19.00px;color:#f0f0f1;transform:scaleX(1.0284);">Settings</div>
<div class="t " id="t20" style="left:359.66px;top:69.13px;font-size:38.00px;color:#5b95c8;font-weight:700;transform:scaleX(1.0784);">Sheet</div>
<div class="t " id="t21" style="left:360.10px;top:102.21px;font-size:45.00px;color:#5b95c8;font-weight:700;transform:scaleX(1.0873);">Editor</div>
<div class="t " id="t22" style="left:1131.78px;top:55.79px;font-size:19.50px;color:#3c434a;transform:scaleX(0.9854);text-decoration:underline;text-underline-offset:2px;">Activate full screen</div>
<div class="t " id="t23" style="left:269.80px;top:181.61px;font-size:18.30px;color:#3c434a;transform:scaleX(0.9877);">Settings</div>
<div class="t " id="t24" style="left:356.99px;top:181.61px;font-size:18.30px;color:#3c434a;transform:scaleX(1.0111);">Help</div>
<div class="t " id="t25" style="left:416.46px;top:181.61px;font-size:18.30px;color:#3c434a;transform:scaleX(0.9443);">Extensions</div>
<div class="t " id="t26" style="left:523.00px;top:181.61px;font-size:18.30px;color:#3c434a;">Global sort</div>
<div class="t " id="t27" style="left:633.01px;top:181.61px;font-size:18.30px;color:#3c434a;transform:scaleX(0.9940);">My license</div>
<div class="t " id="t28" style="left:740.01px;top:181.61px;font-size:18.30px;color:#3c434a;transform:scaleX(0.9865);">Columns manager</div>
<div class="t " id="t29" style="left:909.04px;top:181.61px;font-size:18.30px;color:#3c434a;transform:scaleX(0.9615);">Export</div>
<div class="t " id="t30" style="left:980.84px;top:181.61px;font-size:18.30px;color:#3c434a;transform:scaleX(1.0800);">Import</div>
<div class="t " id="t31" style="left:294.01px;top:233.94px;font-size:18.50px;color:#fff;transform:scaleX(0.9950);">Save</div>
<div class="t " id="t32" style="left:385.00px;top:233.94px;font-size:18.50px;color:#3c434a;transform:scaleX(1.0514);">Add new</div>
<div class="t " id="t33" style="left:483.60px;top:231.74px;font-size:18.50px;color:#2c3338;">1</div>
<div class="t " id="t34" style="left:598.37px;top:233.94px;font-size:18.50px;color:#3c434a;transform:scaleX(1.0107);">Search</div>
<div class="t " id="t35" style="left:707.54px;top:233.94px;font-size:18.50px;color:#3c434a;transform:scaleX(1.0352);">Bulk Edit</div>
<div class="t " id="t36" style="left:836.31px;top:233.94px;font-size:18.50px;color:#3c434a;transform:scaleX(1.0600);">Duplicate</div>
<div class="t " id="t37" style="left:962.00px;top:233.94px;font-size:18.50px;color:#3c434a;">AI</div>
<div class="t " id="t38" style="left:1008.96px;top:232.54px;font-size:18.50px;color:#50575e;transform:scaleX(1.0419);">Locate cell</div>
<div class="t " id="t39" style="left:1220.94px;top:232.54px;font-size:18.50px;color:#50575e;transform:scaleX(1.0559);">Locate column</div>
<div class="t " id="t40" style="left:265.76px;top:291.56px;font-size:18.00px;color:#3a4047;font-weight:700;transform:scaleX(1.0246);">Current spreadsheet:</div>
<div class="t " id="t41" style="left:455.59px;top:291.56px;font-size:18.00px;color:#3c434a;transform:scaleX(1.0043);">Posts.</div>
<div class="t " id="t42" style="left:510.23px;top:291.56px;font-size:18.00px;color:#3a4047;font-weight:700;transform:scaleX(0.9745);">Rows:</div>
<div class="t " id="t43" style="left:565.80px;top:291.56px;font-size:18.00px;color:#3c434a;transform:scaleX(1.2000);">11.</div>
<div class="t " id="t44" style="left:420.07px;top:339.34px;font-size:18.50px;color:#222;transform:scaleX(1.0875);">ID</div>
<div class="t " id="t45" style="left:608.32px;top:339.34px;font-size:18.50px;color:#222;transform:scaleX(1.0818);">Title</div>
<div class="t " id="t46" style="left:895.97px;top:339.34px;font-size:18.50px;color:#222;transform:scaleX(1.0672);">Content</div>
<div class="t " id="t47" style="left:1177.39px;top:339.34px;font-size:18.50px;color:#222;">Typos</div>
<div class="t " id="t48" style="left:1424.79px;top:339.34px;font-size:18.50px;color:#222;">Excerpt</div>
<div class="t " id="t49" style="left:1671.13px;top:339.34px;font-size:18.50px;color:#222;transform:scaleX(1.0419);">Featured Image</div>
<div class="t rn" id="t50" style="left:252.00px;top:370.43px;font-size:19.10px;color:#2c3338;width:70px;text-align:center;">1</div>
<div class="t " id="t51" style="left:402.58px;top:377.83px;font-size:19.10px;color:#3c434a;transform:scaleX(1.0118);">36089</div>
<div class="t " id="t52" style="left:489.59px;top:377.83px;font-size:19.10px;color:#3c434a;transform:scaleX(1.0041);">Dance Challenges and Digital ...</div>
<div class="t " id="t53" style="left:841.00px;top:378.63px;font-size:19.10px;color:#3c434a;transform:scaleX(1.0047);">TikTok has undeniably rev...</div>
<div class="t " id="t54" style="left:1322.00px;top:378.63px;font-size:19.10px;color:#3c434a;transform:scaleX(1.0322);">TikTok revolutionized pop mu...</div>
<div class="t " id="t55" style="left:1725.59px;top:378.63px;font-size:19.10px;color:#3c434a;transform:scaleX(1.0120);">4edd5e2d8e8b...</div>
<div class="t " id="t56" style="left:1888.00px;top:378.63px;font-size:19.10px;color:#3c434a;">Vi</div>
<div class="t rn" id="t57" style="left:252.00px;top:416.23px;font-size:19.10px;color:#2c3338;width:70px;text-align:center;">2</div>
<div class="t " id="t58" style="left:402.58px;top:423.63px;font-size:19.10px;color:#3c434a;transform:scaleX(1.0118);">36088</div>
<div class="t " id="t59" style="left:489.60px;top:423.63px;font-size:19.10px;color:#3c434a;">Cancel Culture vs. Accountabi...</div>
<div class="t " id="t60" style="left:841.00px;top:424.43px;font-size:19.10px;color:#3c434a;transform:scaleX(1.0039);">The discourse surroundin...</div>
<div class="t " id="t61" style="left:1321.00px;top:424.43px;font-size:19.10px;color:#3c434a;transform:scaleX(1.0035);">Cancel Culture blurs account...</div>
<div class="t " id="t62" style="left:1724.60px;top:424.43px;font-size:19.10px;color:#3c434a;">63e7b928a4d3...</div>
<div class="t " id="t63" style="left:1888.00px;top:424.43px;font-size:19.10px;color:#3c434a;">Ac</div>
<div class="t rn" id="t64" style="left:252.00px;top:462.03px;font-size:19.10px;color:#2c3338;width:70px;text-align:center;">3</div>
<div class="t " id="t65" style="left:402.58px;top:469.43px;font-size:19.10px;color:#3c434a;transform:scaleX(1.0118);">36087</div>
<div class="t " id="t66" style="left:489.63px;top:469.43px;font-size:19.10px;color:#3c434a;transform:scaleX(0.9711);">Remakes, Reboots, and Reviv...</div>
<div class="t " id="t67" style="left:841.00px;top:470.23px;font-size:19.10px;color:#3c434a;transform:scaleX(0.9929);">The increasing prevalence...</div>
<div class="t " id="t68" style="left:1321.00px;top:470.23px;font-size:19.10px;color:#3c434a;">Remakes and reboots: financi...</div>
<div class="t " id="t69" style="left:1724.60px;top:470.23px;font-size:19.10px;color:#3c434a;transform:scaleX(0.9964);">251c9c2ea71ff...</div>
<div class="t " id="t70" style="left:1887.00px;top:470.23px;font-size:19.10px;color:#3c434a;">No</div>
<div class="t rn" id="t71" style="left:252.00px;top:507.83px;font-size:19.10px;color:#2c3338;width:70px;text-align:center;">4</div>
<div class="t " id="t72" style="left:402.58px;top:515.23px;font-size:19.10px;color:#3c434a;transform:scaleX(1.0118);">36086</div>
<div class="t " id="t73" style="left:489.60px;top:515.23px;font-size:19.10px;color:#3c434a;">Global Pop Culture: How K-Po...</div>
<div class="t " id="t74" style="left:841.00px;top:516.03px;font-size:19.10px;color:#3c434a;">The global music landscap...</div>
<div class="t " id="t75" style="left:1320.98px;top:516.03px;font-size:19.10px;color:#3c434a;transform:scaleX(1.0154);">K-Pop and Latin music's glob...</div>
<div class="t " id="t76" style="left:1724.60px;top:516.03px;font-size:19.10px;color:#3c434a;transform:scaleX(0.9964);">251c9c2ea71ff...</div>
<div class="t " id="t77" style="left:1887.00px;top:516.03px;font-size:19.10px;color:#3c434a;">Fu</div>
<div class="t rn" id="t78" style="left:252.00px;top:553.63px;font-size:19.10px;color:#2c3338;width:70px;text-align:center;">5</div>
<div class="t " id="t79" style="left:402.58px;top:561.03px;font-size:19.10px;color:#3c434a;transform:scaleX(1.0118);">36085</div>
<div class="t " id="t80" style="left:489.57px;top:561.03px;font-size:19.10px;color:#3c434a;transform:scaleX(1.0225);">Gaming Is the New Hollywoo...</div>
<div class="t " id="t81" style="left:841.00px;top:561.83px;font-size:19.10px;color:#3c434a;transform:scaleX(1.0105);">The lines between gaming...</div>
<div class="t " id="t82" style="left:1320.98px;top:561.83px;font-size:19.10px;color:#3c434a;transform:scaleX(1.0232);">Gaming is the new Hollywoo...</div>
<div class="t " id="t83" style="left:1724.60px;top:561.83px;font-size:19.10px;color:#3c434a;">731a3c2f39bf8...</div>
<div class="t " id="t84" style="left:1887.00px;top:561.83px;font-size:19.10px;color:#3c434a;">Na</div>
<div class="t rn" id="t85" style="left:252.00px;top:599.43px;font-size:19.10px;color:#2c3338;width:70px;text-align:center;">6</div>
<div class="t " id="t86" style="left:402.61px;top:606.83px;font-size:19.10px;color:#3c434a;transform:scaleX(0.9923);">36084</div>
<div class="t " id="t87" style="left:490.60px;top:606.83px;font-size:19.10px;color:#3c434a;transform:scaleX(0.9838);">The Fashion Collabs That Defi...</div>
<div class="t " id="t88" style="left:839.99px;top:607.63px;font-size:19.10px;color:#3c434a;transform:scaleX(1.0052);">Fashion collaborations ha...</div>
<div class="t " id="t89" style="left:1320.99px;top:607.63px;font-size:19.10px;color:#3c434a;transform:scaleX(1.0139);">Fashion collaborations, from ...</div>
<div class="t " id="t90" style="left:1725.59px;top:607.63px;font-size:19.10px;color:#3c434a;transform:scaleX(1.0120);">4edd5e2d8e8b...</div>
<div class="t " id="t91" style="left:1888.00px;top:607.63px;font-size:19.10px;color:#3c434a;">Co</div>
<div class="t rn" id="t92" style="left:252.00px;top:645.23px;font-size:19.10px;color:#2c3338;width:70px;text-align:center;">7</div>
<div class="t " id="t93" style="left:402.58px;top:652.63px;font-size:19.10px;color:#3c434a;transform:scaleX(1.0118);">36083</div>
<div class="t " id="t94" style="left:489.58px;top:652.63px;font-size:19.10px;color:#3c434a;transform:scaleX(1.0128);">How Nostalgia Became a Mar...</div>
<div class="t " id="t95" style="left:839.98px;top:653.43px;font-size:19.10px;color:#3c434a;transform:scaleX(1.0208);">Nostalgia has transformed...</div>
<div class="t " id="t96" style="left:1320.97px;top:653.43px;font-size:19.10px;color:#3c434a;transform:scaleX(1.0339);">Nostalgia is a potent marketi...</div>
<div class="t " id="t97" style="left:1725.59px;top:653.43px;font-size:19.10px;color:#3c434a;transform:scaleX(1.0120);">4edd5e2d8e8b...</div>
<div class="t " id="t98" style="left:1887.00px;top:653.43px;font-size:19.10px;color:#3c434a;">No</div>
<div class="t rn" id="t99" style="left:252.00px;top:691.03px;font-size:19.10px;color:#2c3338;width:70px;text-align:center;">8</div>
<div class="t " id="t100" style="left:402.58px;top:698.43px;font-size:19.10px;color:#3c434a;transform:scaleX(1.0118);">36082</div>
<div class="t " id="t101" style="left:489.61px;top:698.43px;font-size:19.10px;color:#3c434a;transform:scaleX(0.9861);">Celebrity Brands: When Fame ...</div>
<div class="t " id="t102" style="left:839.99px;top:699.23px;font-size:19.10px;color:#3c434a;transform:scaleX(1.0077);">Celebrity brands have evo...</div>
<div class="t " id="t103" style="left:1320.98px;top:699.23px;font-size:19.10px;color:#3c434a;transform:scaleX(1.0176);">Celebrity brands evolve from ...</div>
<div class="t " id="t104" style="left:1725.59px;top:699.23px;font-size:19.10px;color:#3c434a;transform:scaleX(1.0120);">4edd5e2d8e8b...</div>
<div class="t " id="t105" style="left:1887.00px;top:699.23px;font-size:19.10px;color:#3c434a;">En</div>
<div class="t rn" id="t106" style="left:252.00px;top:736.83px;font-size:19.10px;color:#2c3338;width:70px;text-align:center;">9</div>
<div class="t " id="t107" style="left:402.58px;top:744.23px;font-size:19.10px;color:#3c434a;transform:scaleX(1.0118);">36081</div>
<div class="t " id="t108" style="left:489.58px;top:744.23px;font-size:19.10px;color:#3c434a;transform:scaleX(1.0167);">Pop Culture Moments That Br...</div>
<div class="t " id="t109" style="left:841.00px;top:745.03px;font-size:19.10px;color:#3c434a;transform:scaleX(1.0258);">The &quot;distracted boyfriend&quot;...</div>
<div class="t " id="t110" style="left:1320.98px;top:745.03px;font-size:19.10px;color:#3c434a;transform:scaleX(1.0198);">&quot;Distracted boyfriend,&quot; Beyon...</div>
<div class="t " id="t111" style="left:1724.60px;top:745.03px;font-size:19.10px;color:#3c434a;transform:scaleX(0.9964);">251c9c2ea71ff...</div>
<div class="t " id="t112" style="left:1888.00px;top:745.03px;font-size:19.10px;color:#3c434a;">Vi</div>
<div class="t rn" id="t113" style="left:252.00px;top:782.63px;font-size:19.10px;color:#2c3338;width:70px;text-align:center;">10</div>
<div class="t " id="t114" style="left:402.58px;top:790.03px;font-size:19.10px;color:#3c434a;transform:scaleX(1.0118);">36080</div>
<div class="t " id="t115" style="left:490.59px;top:790.03px;font-size:19.10px;color:#3c434a;transform:scaleX(1.0191);">The Downfall of the Influence...</div>
<div class="t " id="t116" style="left:841.00px;top:790.83px;font-size:19.10px;color:#3c434a;transform:scaleX(1.0047);">The carefully curated, pict...</div>
<div class="t " id="t117" style="left:1322.00px;top:790.83px;font-size:19.10px;color:#3c434a;transform:scaleX(1.0165);">Audiences now demand auth...</div>
<div class="t " id="t118" style="left:1724.60px;top:790.83px;font-size:19.10px;color:#3c434a;transform:scaleX(0.9964);">251c9c2ea71ff...</div>
<div class="t " id="t119" style="left:1888.00px;top:790.83px;font-size:19.10px;color:#3c434a;">Au</div>
<svg class="a" style="left:1170px;top:130px" width="90" height="210" viewBox="1170 130 90 210">
<g fill="none" stroke-linejoin="miter" stroke-linecap="butt">
<path d="M1224.6 150 L1210.5 310" stroke="#fff" stroke-width="20"/>
<path d="M1195 287 L1209.5 315 L1229 290" stroke="#fff" stroke-width="20"/>
<path d="M1224.6 150 L1210.5 308" stroke="#f00" stroke-width="8.5"/>
<path d="M1195 287 L1209.5 313 L1229 290" stroke="#f00" stroke-width="8.5"/>
</g></svg>
<div class="a" id="track"></div>
<svg class="a" style="left:1905px;top:0" width="15" height="14" viewBox="0 0 15 14"><path d="M3 10.8 L12.2 10.8 L7.6 4.2 Z" fill="#8e8e8e"/></svg>
<div class="a" id="thumb"></div>
</body></html>
